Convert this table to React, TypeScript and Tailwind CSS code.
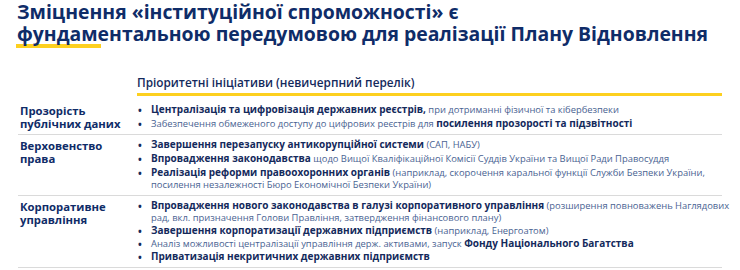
const navy = "text-[#0f2c68]";

function B({ children }: { children: React.ReactNode }) {
  return <span className="text-[10px] leading-[10px] font-bold text-[#142a5c]">{children}</span>;
}

function Item({ children }: { children: React.ReactNode }) {
  return (
    <li className="flex">
      <span className="w-[14px] shrink-0 pl-[1px] text-[10px] font-bold text-[#142a5c]">•</span>
      <span className="whitespace-nowrap">{children}</span>
    </li>
  );
}

function Row({ label, children, last = false, first = false }: { label: string[]; children: React.ReactNode; last?: boolean; first?: boolean }) {
  return (
    <div className={`flex ${first ? "pt-[8px]" : "pt-[4px]"} pb-[4px] ${last ? "" : "border-b border-[#dadada]"}`}>
      <div className={`w-[119px] shrink-0 pl-[2px] text-[11.3px] font-bold leading-[13px] ${navy}`}>
        {label.map(l => <div key={l}>{l}</div>)}
      </div>
      <ul className="flex-1 text-[9.4px] leading-[12px] text-[#4a6392]">{children}</ul>
    </div>
  );
}

export default function App() {
  return (
    <div className="w-[740px] h-[270px] bg-white overflow-hidden" style={{ fontFamily: '"Open Sans", "Liberation Sans", sans-serif' }}>
      <h1 className={`pl-[17px] pt-[1px] text-[19.4px] font-bold leading-[22px] ${navy}`}>
        Зміцнення «інституційної спроможності» є
        <br />
        <span className="relative">
          <span className="absolute left-[-1px] w-[85px] bottom-[-1px] h-[4px] bg-[#fdd01f]" />
          <span className="relative">фундаментальною</span>
        </span>{" "}
        передумовою для реалізації Плану Відновлення
      </h1>

      <div className="ml-[18px] mr-[18px] mt-[29px]">
        <div className="ml-[119px] border-b-[3px] border-[#fdd01f] pb-[3px] text-[11.8px] font-semibold leading-[16px] text-[#142a5c]">
          Пріоритетні ініціативи (невичерпний перелік)
        </div>

        <Row first label={["Прозорість", "публічних даних"]}>
          <div className="space-y-[2px]">
            <Item><B>Централізація та цифровізація державних реєстрів,</B> при дотриманні фізичної та кібербезпеки</Item>
            <Item>Забезпечення обмеженого доступу до цифрових реєстрів для <B>посилення прозорості та підзвітності</B></Item>
          </div>
        </Row>

        <Row label={["Верховенство", "права"]}>
          <div className="space-y-[2px]">
            <Item><B>Завершення перезапуску антикорупційної системи</B> (САП, НАБУ)</Item>
            <Item><B>Впровадження законодавства</B> щодо Вищої Кваліфікаційної Комісії Суддів України та Вищої Ради Правосуддя</Item>
            <Item>
              <B>Реалізація реформи правоохоронних органів</B> (наприклад, скорочення каральної функції Служби Безпеки України,
              <br />
              посилення незалежності Бюро Економічної Безпеки України)
            </Item>
          </div>
        </Row>

        <Row last label={["Корпоративне", "управління"]}>
          <div className="space-y-[1px]">
            <Item>
              <B>Впровадження нового законодавства в галузі корпоративного управління</B> (розширення повноважень Наглядових
              <br />
              рад, вкл. призначення Голови Правління, затвердження фінансового плану)
            </Item>
            <Item><B>Завершення корпоратизації державних підприємств</B> (наприклад, Енергоатом)</Item>
            <Item>Аналіз можливості централізації управління держ. активами, запуск <B>Фонду Національного Багатства</B></Item>
            <Item><B>Приватизація некритичних державних підприємств</B></Item>
          </div>
        </Row>
        <div className="border-b border-[#dadada]" />
      </div>
    </div>
  );
}
